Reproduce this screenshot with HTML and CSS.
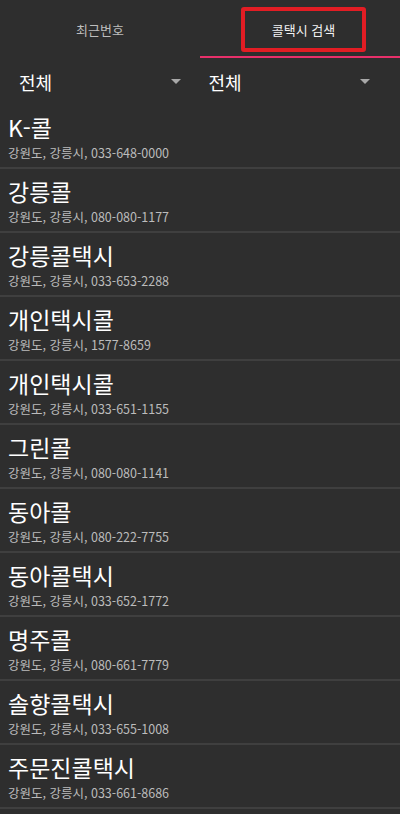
FILE: index.html
```html
<!DOCTYPE html>
<html lang="ko">
<head>
<meta charset="utf-8">
<link rel="stylesheet" href="styles.css">
</head>
<body>
<div class="tabs">
  <div class="tab">최근번호</div>
  <div class="tab active"><span class="hl">콜택시 검색</span></div>
</div>
<div class="filters">
  <div class="select"><span>전체</span><svg class="arrow" width="10" height="5" viewBox="0 0 10 5"><path d="M0 0H10L5 5Z" fill="#a8a8a8"/></svg></div>
  <div class="select"><span>전체</span><svg class="arrow" width="10" height="5" viewBox="0 0 10 5"><path d="M0 0H10L5 5Z" fill="#a8a8a8"/></svg></div>
</div>
<ul class="list">
  <li><div class="name">K-콜</div><div class="info">강원도, 강릉시, 033-648-0000</div></li>
  <li><div class="name">강릉콜</div><div class="info">강원도, 강릉시, 080-080-1177</div></li>
  <li><div class="name">강릉콜택시</div><div class="info">강원도, 강릉시, 033-653-2288</div></li>
  <li><div class="name">개인택시콜</div><div class="info">강원도, 강릉시, 1577-8659</div></li>
  <li><div class="name">개인택시콜</div><div class="info">강원도, 강릉시, 033-651-1155</div></li>
  <li><div class="name">그린콜</div><div class="info">강원도, 강릉시, 080-080-1141</div></li>
  <li><div class="name">동아콜</div><div class="info">강원도, 강릉시, 080-222-7755</div></li>
  <li><div class="name">동아콜택시</div><div class="info">강원도, 강릉시, 033-652-1772</div></li>
  <li><div class="name">명주콜</div><div class="info">강원도, 강릉시, 080-661-7779</div></li>
  <li><div class="name">솔향콜택시</div><div class="info">강원도, 강릉시, 033-655-1008</div></li>
  <li><div class="name">주문진콜택시</div><div class="info">강원도, 강릉시, 033-661-8686</div></li>
</ul>
</body>
</html>
```
FILE: styles.css
```css
html, body {
  margin: 0;
  padding: 0;
  background: #2e2e2e;
  font-family: "Noto Sans CJK KR", "Noto Sans", sans-serif;
  color: #ffffff;
  overflow: hidden;
}
.tabs {
  display: flex;
  height: 58px;
}
.tab {
  flex: 1 1 0;
  display: flex;
  align-items: center;
  justify-content: center;
  font-size: 13px;
  color: #bdbdbd;
  box-sizing: border-box;
}
.tab.active {
  color: #f2f2f2;
  border-bottom: 2px solid #e8306a;
  padding-top: 2px;
}
.hl {
  display: flex;
  align-items: center;
  justify-content: center;
  width: 117px;
  height: 37px;
  margin-left: 7px;
  border: 4px solid #e21d24;
  border-radius: 3px;
}
.filters {
  display: flex;
  height: 47px;
}
.select {
  flex: 1 1 0;
  display: flex;
  align-items: center;
  justify-content: space-between;
  padding: 0 19px 0 19px;
  font-size: 18px;
  color: #ffffff;
}
.select + .select {
  padding-left: 9px;
  padding-right: 30px;
}
.arrow {
  display: block;
}
.list {
  list-style: none;
  margin: 0;
  padding: 0;
}
.list li {
  border-bottom: 2px solid #3f3f3f;
  padding: 6px 0 0 8px;
  height: 56px;
}
.name {
  font-size: 23px;
  line-height: 33px;
  color: #ffffff;
}
.info {
  font-size: 12.5px;
  line-height: 18px;
  color: #bcbcbc;
}
```
